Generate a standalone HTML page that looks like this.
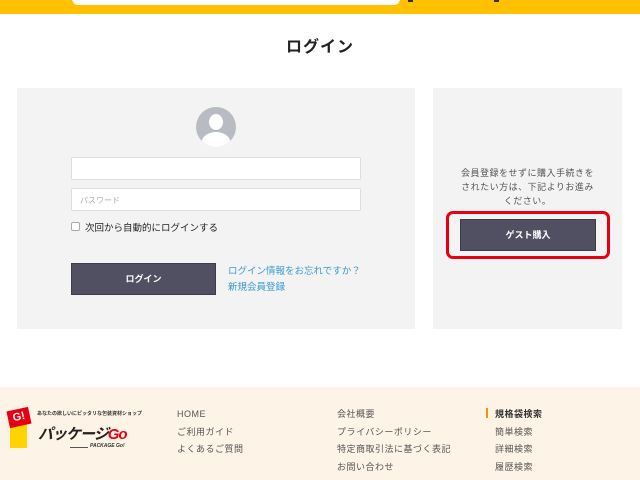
<!DOCTYPE html>
<html><head><meta charset="utf-8"><style>
*{margin:0;padding:0;box-sizing:border-box}
body{width:640px;height:480px;overflow:hidden;background:#fff;font-family:"Liberation Sans","Noto Sans CJK JP",sans-serif;position:relative;color:#333}
.a{position:absolute}
.top{left:0;top:0;width:640px;height:14px;background:#ffc000}
.srch{left:72px;top:-10px;width:328px;height:15px;background:#fff;border-radius:6px}
.panel{background:#f3f3f3}
.inp{background:#fff;border:1px solid #ddd;border-radius:2px}
.btn{background:#514f62;color:#fff;font-size:9px;font-weight:bold;text-align:center;border:1px solid #3e3c4c}
.ft{font-size:9px;color:#555;letter-spacing:.5px}
</style></head><body>
<div class="a top"></div>
<div class="a srch"></div>
<div class="a" style="left:408px;top:0;width:5px;height:2px;background:#333"></div>
<div class="a" style="left:494px;top:0;width:5px;height:2px;background:#333"></div>
<div class="a" style="left:0;top:33px;width:640px;text-align:center;font-size:16px;font-weight:bold;color:#222;letter-spacing:1px">ログイン</div>

<div class="a panel" style="left:17px;top:88px;width:398px;height:241px"></div>
<div class="a" style="left:196px;top:107px;width:40px;height:40px;border-radius:50%;background:#b8bcc2;overflow:hidden">
 <div class="a" style="left:13px;top:7px;width:14px;height:16px;border-radius:50%;background:#fff"></div>
 <div class="a" style="left:5px;top:25px;width:30px;height:24px;border-radius:50%;background:#fff"></div>
</div>
<div class="a inp" style="left:71px;top:157px;width:290px;height:23px"></div>
<div class="a inp" style="left:71px;top:188px;width:290px;height:23px;font-size:8px;color:#aaa;padding:6px 0 0 8px">パスワード</div>
<div class="a" style="left:71px;top:222px;width:9px;height:9px;border:1px solid #aaa;background:#fff;border-radius:2px"></div>
<div class="a" style="left:85px;top:220px;font-size:9.5px;color:#222">次回から自動的にログインする</div>
<div class="a btn" style="left:71px;top:263px;width:145px;height:32px;line-height:30px">ログイン</div>
<div class="a" style="left:228px;top:264px;font-size:9.5px;color:#3a9ad0;line-height:16px">ログイン情報をお忘れですか？<br>新規会員登録</div>

<div class="a panel" style="left:433px;top:88px;width:189px;height:241px"></div>
<div class="a" style="left:433px;top:166px;width:189px;text-align:center;font-size:9px;color:#555;line-height:14px;letter-spacing:.5px">会員登録をせずに購入手続きを<br>されたい方は、下記よりお進み<br>ください。</div>
<div class="a" style="left:446px;top:211px;width:164px;height:48px;border:3px solid #e60012;border-radius:7px"></div>
<div class="a btn" style="left:460px;top:219px;width:136px;height:32px;line-height:30px">ゲスト購入</div>

<div class="a" style="left:0;top:387px;width:640px;height:93px;background:#fdf3e6"></div>
<div class="a" style="left:10px;top:420px;width:17px;height:28px;background:#ffd400"></div>
<div class="a" style="left:8px;top:409px;width:22px;height:17px;background:#e60012;transform:rotate(-12deg);color:#fff;font-size:11px;font-weight:bold;text-align:center;line-height:17px">G!</div>
<div class="a" style="left:37px;top:410px;font-size:5px;font-weight:bold;color:#333">あなたの欲しいにピッタリな包装資材ショップ</div>
<div class="a" style="left:38px;top:423px;font-size:15px;font-weight:bold;font-style:italic;color:#222;letter-spacing:-1px">パッケージ<span style="color:#e60012">Go</span></div>
<div class="a" style="left:70px;top:447px;width:50px;height:1px;background:#555"></div>
<div class="a" style="left:88px;top:443px;font-size:5px;font-style:italic;font-weight:bold;color:#333;background:#fdf3e6;padding:0 2px">PACKAGE Go!</div>

<div class="a ft" style="left:177px;top:406px;line-height:17.5px">HOME<br>ご利用ガイド<br>よくあるご質問</div>
<div class="a ft" style="left:337px;top:406px;line-height:17.5px">会社概要<br>プライバシーポリシー<br>特定商取引法に基づく表記<br>お問い合わせ</div>
<div class="a" style="left:486px;top:408px;width:2px;height:10px;background:#f39800"></div>
<div class="a ft" style="left:495px;top:406px;line-height:17.5px"><b style="color:#333">規格袋検索</b><br>簡単検索<br>詳細検索<br>履歴検索</div>
</body></html>
